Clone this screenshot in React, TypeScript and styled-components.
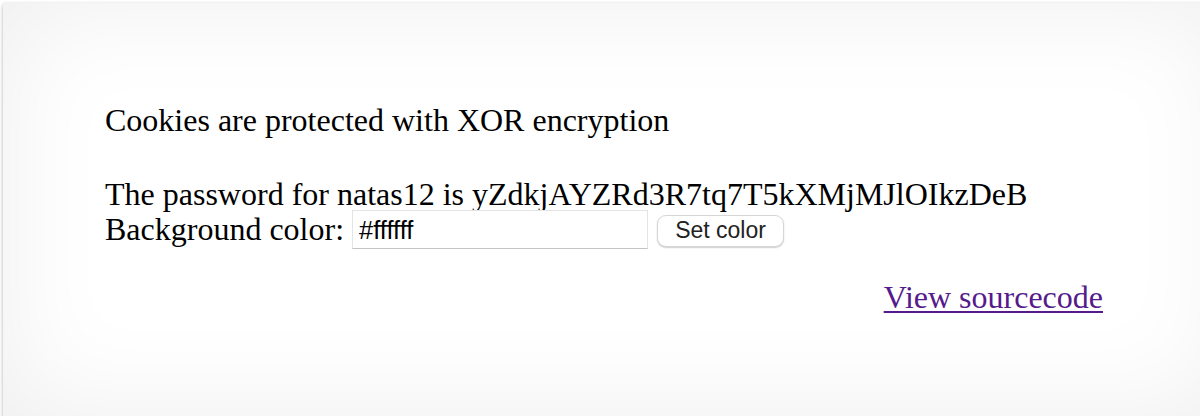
import React from "react";
import styled, { createGlobalStyle } from "styled-components";

const Global = createGlobalStyle`
  html, body {
    margin: 0;
    padding: 0;
    background: #ffffff;
    overflow: hidden;
  }
`;

const Panel = styled.div`
  box-sizing: border-box;
  margin: 3px 0 0 3px;
  width: 1230px;
  height: 413px;
  padding: 99px 0 0 102px;
  background: #ffffff;
  box-shadow: 0 0 3px rgba(0, 0, 0, 0.12), 0 3px 4px rgba(0, 0, 0, 0.22),
    inset 0 0 110px rgba(0, 0, 0, 0.07);
  font-family: "Liberation Serif", "Times New Roman", serif;
  font-size: 32px;
  color: #000;
`;

const Inner = styled.div`
  width: 998px;
`;

const Line = styled.div<{ $gap?: number }>`
  line-height: 36.8px;
  margin-top: ${(p) => p.$gap ?? 0}px;
`;

const Form = styled.form`
  margin: 0;
  line-height: 36.8px;
  display: flex;
  align-items: center;
  height: 40px;
  margin-top: -3px;
`;

const Label = styled.span`
  margin-right: 8px;
`;

const ColorInput = styled.input`
  box-sizing: border-box;
  width: 296px;
  height: 39px;
  padding: 2px 0 0 6px;
  margin: 0 9px 0 0;
  border: 1px solid #e4e4e4;
  border-bottom-color: #c4c4c4;
  border-radius: 0;
  font-family: "Liberation Sans", Arial, sans-serif;
  font-size: 25.5px;
  color: #000;
  background: #fff;
  outline: none;
`;

const SetButton = styled.button`
  box-sizing: border-box;
  width: 127px;
  height: 32px;
  padding: 0;
  margin: 3px 0 0 0;
  border: 1px solid #d6d6d6;
  border-radius: 9px;
  background: #ffffff;
  box-shadow: 0 1px 1.5px rgba(0, 0, 0, 0.2);
  font-family: "Liberation Sans", Arial, sans-serif;
  font-size: 23px;
  color: #222;
`;

const ViewSource = styled.div`
  text-align: right;
  line-height: 36.8px;
  margin-top: 30px;
`;

const SourceLink = styled.a`
  color: #551a8b;
  text-decoration: underline;
  text-decoration-thickness: 2px;
  text-underline-offset: 3px;
`;

export default function App() {
  return (
    <>
      <Global />
      <Panel>
        <Inner>
          <Line>Cookies are protected with XOR encryption</Line>
          <Line $gap={36.8}>
            The password for natas12 is yZdkjAYZRd3R7tq7T5kXMjMJlOIkzDeB
          </Line>
          <Form onSubmit={(e) => e.preventDefault()}>
            <Label>Background color:</Label>
            <ColorInput name="bgcolor" defaultValue="#ffffff" />
            <SetButton type="submit">Set color</SetButton>
          </Form>
          <ViewSource>
            <SourceLink href="#">View sourcecode</SourceLink>
          </ViewSource>
        </Inner>
      </Panel>
    </>
  );
}
